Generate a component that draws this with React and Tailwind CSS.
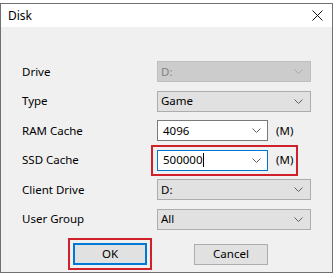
import React from "react";

const Chevron = ({ color = "#5f5f5f" }) => (
  <svg width="9" height="5" viewBox="0 0 9 5" className="shrink-0">
    <path d="M0.5 0.5 L4.5 4.5 L8.5 0.5" fill="none" stroke={color} strokeWidth="1" />
  </svg>
);

const Select = ({ value, disabled }) => (
  <div
    className={
      "flex h-[21px] w-[154px] items-center justify-between border pl-[3px] pr-[7px] " +
      (disabled
        ? "border-[#bfbfbf] bg-[#cccccc] text-[#838383]"
        : "border-[#adadad] bg-[#e1e1e1] text-black")
    }
  >
    <span>{value}</span>
    <Chevron color={disabled ? "#a8a8a8" : "#5f5f5f"} />
  </div>
);

const EditCombo = ({ value, focused }) => (
  <div
    className={
      "flex h-[21px] w-[111px] items-center justify-between border bg-white pl-[5px] pr-[6px] " +
      (focused ? "border-[#0078d7]" : "border-[#7a7a7a]")
    }
  >
    <span className="flex items-center">
      {value}
      {focused && <span className="ml-[1px] inline-block h-[14px] w-px bg-black" />}
    </span>
    <Chevron />
  </div>
);

const Row = ({ label, children }) => (
  <div className="flex h-[21px] items-center">
    <div className="w-[135px] shrink-0">{label}</div>
    {children}
  </div>
);

export default function App() {
  return (
    <div
      className="h-[278px] w-[336px] overflow-hidden bg-white text-[11.5px] leading-none text-black"
      style={{ fontFamily: '"Noto Sans", "Open Sans", sans-serif' }}
    >
      {/* cut-off table text behind the dialog */}
      <div className="relative h-[3px] overflow-hidden text-[12px] text-[#444]">
        <span className="absolute left-[163px] top-[-10px]">110/21</span>
        <span className="absolute left-[284px] top-[-10px]">38/32</span>
      </div>

      <div className="w-[333px] border border-[#707070] bg-[#f0f0f0]">
        {/* TITLE */}
        <div className="flex h-[23px] items-center justify-between bg-white pl-[7px] pr-[9px]">
          <span className="text-[12px]">Disk</span>
          <svg width="11" height="11" viewBox="0 0 11 11">
            <path d="M0.5 0.5 L10.5 10.5 M10.5 0.5 L0.5 10.5" stroke="#111" strokeWidth="1" />
          </svg>
        </div>

        {/* FORM */}
        <div className="flex flex-col gap-[8.5px] pl-[21px] pt-[34px]">
          <Row label="Drive">
            <Select value="D:" disabled />
          </Row>
          <Row label="Type">
            <Select value="Game" />
          </Row>
          <Row label="RAM Cache">
            <EditCombo value="4096" />
            <span className="ml-[8px]">(M)</span>
          </Row>
          <Row label="SSD Cache">
            <div className="relative flex items-center">
              <div className="absolute left-[-6px] top-[-5px] h-[31px] w-[147px] border-2 border-[#d0202b]" />
              <EditCombo value="500000" focused />
              <span className="ml-[8px]">(M)</span>
            </div>
          </Row>
          <Row label="Client Drive">
            <Select value="D:" />
          </Row>
          <Row label="User Group">
            <Select value="All" />
          </Row>
        </div>

        {/* ACTIONS */}
        <div className="flex pb-[7px] pl-[72px] pt-[13px]">
          <div className="relative">
            <div className="absolute left-[-5px] top-[-5px] h-[32px] w-[84px] border-2 border-[#d0202b]" />
            <button className="flex h-[22px] w-[74px] items-center justify-center border-2 border-[#0078d7] bg-[#e1e1e1]">
              OK
            </button>
          </div>
          <button className="ml-[47px] mt-px flex h-[21px] w-[74px] items-center justify-center border border-[#adadad] bg-[#e1e1e1]">
            Cancel
          </button>
        </div>
      </div>
    </div>
  );
}
